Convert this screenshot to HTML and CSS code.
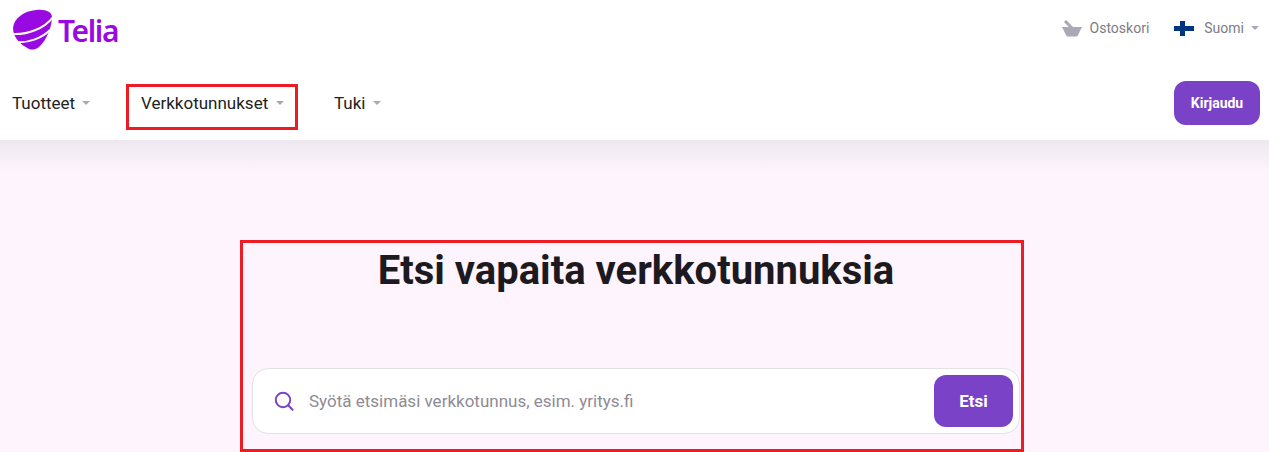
FILE: index.html
```html
<!DOCTYPE html>
<html lang="fi">
<head>
<meta charset="utf-8">
<title>Telia</title>
<link rel="stylesheet" href="styles.css">
</head>
<body>
<header class="header">
  <div class="top">
    <a class="logo">
      <svg class="logo-mark" width="41" height="42" viewBox="4 4 41 42">
        <path fill="#990ae3" d="M5 24C6 14 16 7 28 6C38 5 44 8 44 13C44 22 39 36 31 43C27 46 24 46 21 45C13 41 5 34 5 24Z"/>
        <path fill="none" stroke="#fff" stroke-width="2" d="M4 30C20 31 37 24 45 13"/>
        <path fill="none" stroke="#fff" stroke-width="2" d="M9 38C21 39 34 34 42 26"/>
      </svg>
      <span class="logo-text">Telia</span>
    </a>
    <div class="utils">
      <a class="util cart">
        <svg width="20" height="17" viewBox="0 0 20 17"><path fill="#a9a9b5" d="M0 7H20L16 15Q15.500 16.500 14 16.500H6Q4.500 16.500 4 15Z"/><path stroke="#a9a9b5" stroke-width="3" d="M3 1 10 8"/></svg>
        <span>Ostoskori</span>
      </a>
      <a class="util lang">
        <svg width="20" height="15" viewBox="0 0 20 15"><rect width="20" height="15" fill="#fff"/><rect y="5" width="20" height="5" fill="#003580"/><rect x="6" width="5" height="15" fill="#003580"/></svg>
        <span>Suomi</span>
        <i class="caret"></i>
      </a>
    </div>
  </div>
  <div class="bar">
    <nav class="nav">
      <a class="nav-item first">Tuotteet<i class="caret"></i></a>
      <a class="nav-item marked">Verkkotunnukset<i class="caret"></i></a>
      <a class="nav-item">Tuki<i class="caret"></i></a>
    </nav>
    <a class="login">Kirjaudu</a>
  </div>
</header>
<main class="main">
  <section class="hero">
    <h1 class="title">Etsi vapaita verkkotunnuksia</h1>
    <form class="search">
      <svg class="search-icon" width="20" height="20" viewBox="0 0 20 20"><circle cx="9" cy="9" r="7.200" fill="none" stroke="#7a43c7" stroke-width="2"/><path d="M14.200 14.200 18.500 18.800" stroke="#7a43c7" stroke-width="2" stroke-linecap="round"/></svg>
      <span class="placeholder">Syötä etsimäsi verkkotunnus, esim. yritys.fi</span>
      <button class="go" type="button">Etsi</button>
    </form>
  </section>
</main>
</body>
</html>
```
FILE: styles.css
```css
* { box-sizing: border-box; }
html, body { margin: 0; height: 100%; overflow: hidden; }
body { background: #fef4fe; font-family: Roboto, sans-serif; color: #222; }
.header { height: 141px; background: #fff; border-bottom: 1px solid #ece6ee; display: flex; flex-direction: column; }
.top { height: 70px; display: flex; justify-content: space-between; align-items: flex-start; padding: 0 10px 0 12px; }
.logo { display: flex; align-items: center; height: 50px; gap: 5px; }
.logo-mark { margin-top: 8px; flex: none; }
.logo-text { font-family: "Noto Sans", sans-serif; font-weight: 600; font-size: 30px; letter-spacing: -1.400px; color: #990ae3; margin-top: 10px; }
.utils { display: flex; gap: 25px; height: 56px; align-items: center; font-size: 14px; color: #7d7b86; }
.util { display: flex; align-items: center; }
.cart svg { margin-right: 8px; }
.lang svg { margin-right: 10px; }
.caret { display: inline-block; width: 0; height: 0; border: 4px solid transparent; border-top: 4px solid #a9a9b5; border-bottom: 0; margin-left: 7px; }
.bar { flex: 1; display: flex; justify-content: space-between; align-items: flex-start; padding-right: 9px; }
.nav { display: flex; margin-top: 14px; }
.nav-item { display: flex; align-items: center; height: 46px; padding: 0 0 8px 12px; margin-right: 21px; font-size: 17px; color: #222; border: 3px solid transparent; }
.nav-item .caret { margin-left: 8px; }
.nav-item.first { padding: 0 0 0 12px; border: 0; margin-right: 32px; width: 94px; height: 38px; }
.nav-item.first .caret { margin-left: 7px; }
.nav-item.marked { border-color: #ed1c24; width: 172px; }
.login { margin-top: 11px; width: 86px; height: 44px; border-radius: 12px; background: #7a43c7; color: #fff; font-size: 14px; font-weight: 700; display: flex; align-items: center; justify-content: center; }
.main { height: 311px; padding-top: 99px; background: linear-gradient(#efe8f1, #fef4fe 32px); background-repeat: no-repeat; }
.hero { width: 784px; height: 212px; margin-left: 240px; border: 3px solid #ed1c24; padding: 0 1px 0 9px; display: flex; flex-direction: column; }
.title { margin: 3px 0 0; font-size: 40px; line-height: 50px; font-weight: 700; text-align: center; color: #1c1a20; }
.search { margin-top: 72px; height: 66px; background: #fff; border: 1px solid #e3e0e6; border-radius: 16px; display: flex; align-items: center; padding: 0 6px 0 21px; }
.search-icon { flex: none; margin-right: 15px; }
.placeholder { flex: 1; font-size: 17px; color: #8d8b95; }
.go { width: 79px; height: 52px; border: 0; border-radius: 12px; background: #7a43c7; color: #fff; font: 700 17px Roboto, sans-serif; }
```
